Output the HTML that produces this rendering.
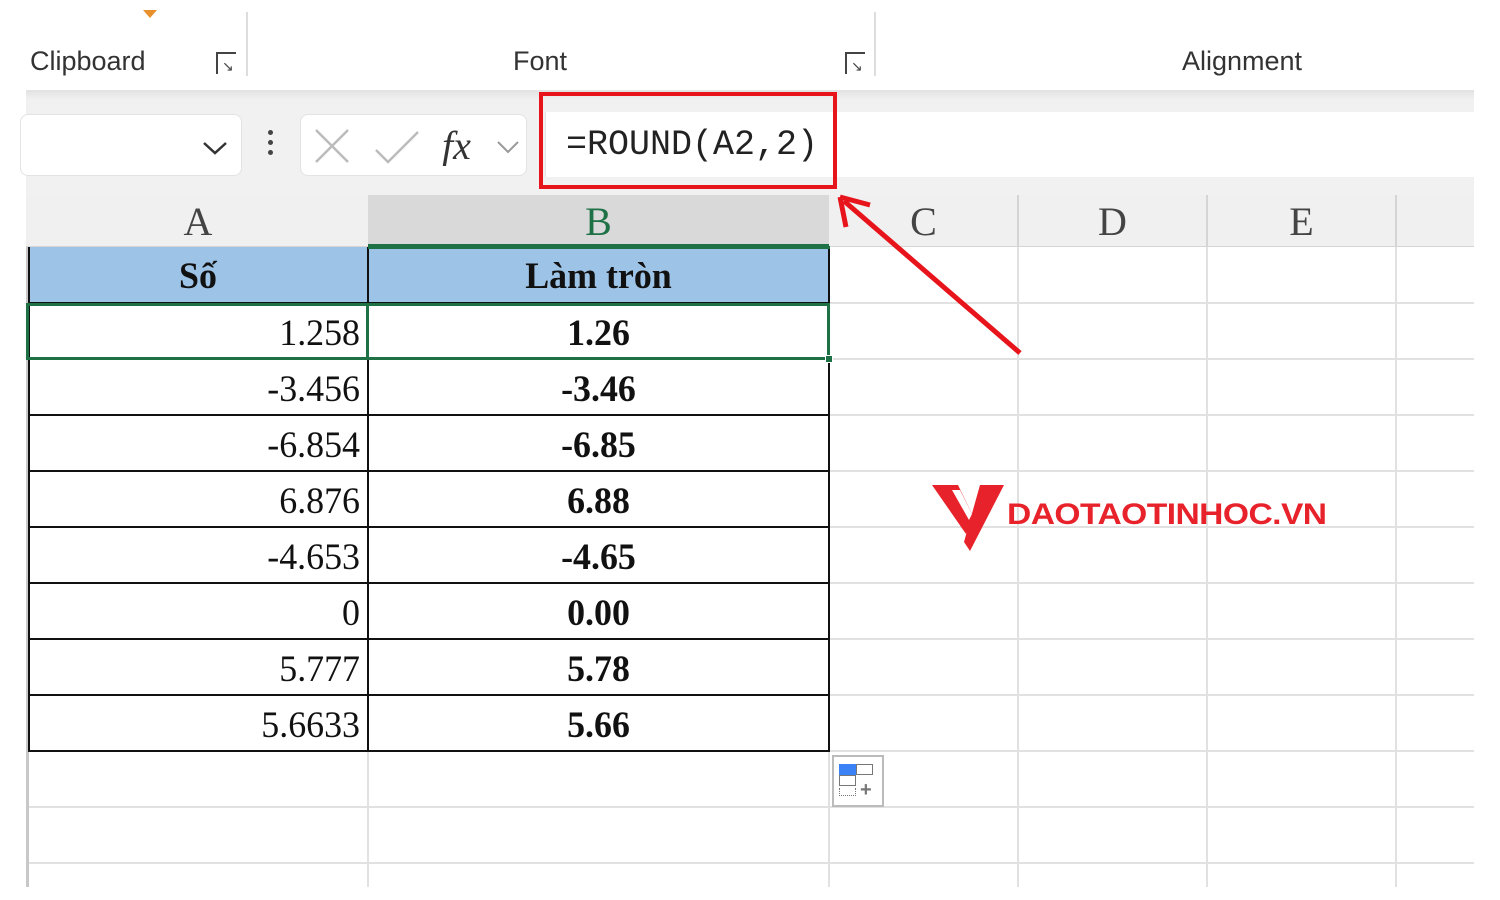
<!DOCTYPE html>
<html><head><meta charset="utf-8"><style>
*{margin:0;padding:0;box-sizing:border-box}
body{width:1500px;height:900px;background:#fff;position:relative;overflow:hidden;font-family:"Liberation Sans",sans-serif}
.a{position:absolute}
.hl{position:absolute;height:2px;background:#e1e1e1}
.vl{position:absolute;width:2px;background:#e1e1e1}
.c{position:absolute;font-family:"Liberation Serif",serif;font-size:37px;line-height:56px;color:#111;transform:scaleX(.97)}
.r{text-align:right;transform-origin:right}
.m{text-align:center;font-weight:bold}
.colh{position:absolute;top:195px;height:52px;font-family:"Liberation Serif",serif;font-size:40px;line-height:54px;text-align:center;color:#444}
</style></head><body>
<!-- ribbon -->
<div class="a" style="left:143px;top:10px;width:0;height:0;border-left:7px solid transparent;border-right:7px solid transparent;border-top:8px solid #e8912c"></div>
<div class="a" style="left:30px;top:46px;font-size:27px;color:#333">Clipboard</div>
<div class="a" style="left:216px;top:52px;width:20px;height:22px;border-left:2px solid #444;border-top:2px solid #444"></div>
<div class="a" style="left:222px;top:58px;font-size:14px;color:#444">↘</div>
<div class="a" style="left:246px;top:12px;width:2px;height:64px;background:#ddd"></div>
<div class="a" style="left:513px;top:46px;font-size:27px;color:#333">Font</div>
<div class="a" style="left:845px;top:52px;width:20px;height:22px;border-left:2px solid #444;border-top:2px solid #444"></div>
<div class="a" style="left:851px;top:58px;font-size:14px;color:#444">↘</div>
<div class="a" style="left:874px;top:12px;width:2px;height:64px;background:#ddd"></div>
<div class="a" style="left:1182px;top:46px;font-size:27px;color:#333">Alignment</div>
<!-- formula bar -->
<div class="a" style="left:26px;top:90px;width:1448px;height:105px;background:#f1f1f1;border-top:1px solid #ddd"></div>
<div class="a" style="left:26px;top:90px;width:1448px;height:10px;background:linear-gradient(#e2e2e2,#f1f1f1)"></div>
<div class="a" style="left:20px;top:114px;width:222px;height:62px;background:#fff;border:1px solid #e3e3e3;border-radius:8px"></div>
<svg class="a" style="left:200px;top:138px" width="30" height="18"><path d="M4 5 L15 15 L26 5" fill="none" stroke="#333" stroke-width="2.5"/></svg>
<div class="a" style="left:268px;top:130px;width:5px;height:5px;background:#444;border-radius:3px;box-shadow:0 10px 0 #444,0 20px 0 #444"></div>
<div class="a" style="left:300px;top:114px;width:227px;height:62px;background:#fff;border:1px solid #e3e3e3;border-radius:8px"></div>
<svg class="a" style="left:312px;top:126px" width="210" height="40"><path d="M4 4 L36 36 M36 4 L4 36" stroke="#bbb" stroke-width="2.5"/><path d="M64 24 L76 36 L106 6" fill="none" stroke="#bbb" stroke-width="2.5"/><text x="130" y="33" font-family="Liberation Serif" font-style="italic" font-size="40" fill="#333">fx</text><path d="M186 16 L196 26 L206 16" fill="none" stroke="#999" stroke-width="2"/></svg>
<div class="a" style="left:545px;top:112px;width:929px;height:65px;background:#fff;border-left:1px solid #e3e3e3"></div>
<div class="a" style="left:566px;top:125px;font-family:'Liberation Mono',monospace;font-size:35px;color:#222">=ROUND(A2,2)</div>
<div class="a" style="left:539px;top:92px;width:298px;height:97px;border:4px solid #e8141c"></div>
<!-- column headers -->
<div class="a" style="left:26px;top:195px;width:1448px;height:52px;background:#f0f0f0;border-bottom:1px solid #d5d5d5"></div>
<div class="a" style="left:368px;top:195px;width:461px;height:52px;background:#d9d9d9;border-bottom:3px solid #1e7145"></div>
<div class="colh" style="left:28px;width:340px">A</div>
<div class="colh" style="left:368px;width:461px;color:#1e7145">B</div>
<div class="colh" style="left:829px;width:189px">C</div>
<div class="colh" style="left:1018px;width:189px">D</div>
<div class="colh" style="left:1207px;width:189px">E</div>
<div class="vl" style="left:1017px;top:195px;height:52px;background:#d5d5d5"></div>
<div class="vl" style="left:1206px;top:195px;height:52px;background:#d5d5d5"></div>
<div class="vl" style="left:1395px;top:195px;height:52px;background:#d5d5d5"></div>
<!-- grid -->
<div class="hl" style="left:26px;top:302px;width:1448px"></div>
<div class="hl" style="left:26px;top:358px;width:1448px"></div>
<div class="hl" style="left:26px;top:414px;width:1448px"></div>
<div class="hl" style="left:26px;top:470px;width:1448px"></div>
<div class="hl" style="left:26px;top:526px;width:1448px"></div>
<div class="hl" style="left:26px;top:582px;width:1448px"></div>
<div class="hl" style="left:26px;top:638px;width:1448px"></div>
<div class="hl" style="left:26px;top:694px;width:1448px"></div>
<div class="hl" style="left:26px;top:750px;width:1448px"></div>
<div class="hl" style="left:26px;top:806px;width:1448px"></div>
<div class="hl" style="left:26px;top:862px;width:1448px"></div>
<div class="vl" style="left:367px;top:751px;height:136px"></div>
<div class="vl" style="left:828px;top:247px;height:640px"></div>
<div class="vl" style="left:1017px;top:247px;height:640px"></div>
<div class="vl" style="left:1206px;top:247px;height:640px"></div>
<div class="vl" style="left:1395px;top:247px;height:640px"></div>
<div class="a" style="left:26px;top:247px;width:3px;height:640px;background:#c8c8c8"></div>
<!-- table -->
<div class="a" style="left:28px;top:247px;width:801px;height:56px;background:#9dc3e6"></div>
<div class="a" style="left:28px;top:247px;width:802px;height:505px;border:2px solid #111;border-top:none"></div>
<div class="a" style="left:367px;top:247px;width:2px;height:505px;background:#111"></div>
<div class="a" style="left:28px;top:302px;width:801px;height:2px;background:#111"></div>
<div class="a" style="left:28px;top:358px;width:801px;height:2px;background:#111"></div>
<div class="a" style="left:28px;top:414px;width:801px;height:2px;background:#111"></div>
<div class="a" style="left:28px;top:470px;width:801px;height:2px;background:#111"></div>
<div class="a" style="left:28px;top:526px;width:801px;height:2px;background:#111"></div>
<div class="a" style="left:28px;top:582px;width:801px;height:2px;background:#111"></div>
<div class="a" style="left:28px;top:638px;width:801px;height:2px;background:#111"></div>
<div class="a" style="left:28px;top:694px;width:801px;height:2px;background:#111"></div>
<!-- green selection -->
<div class="a" style="left:368px;top:246px;width:462px;height:3px;background:#1e7145"></div>
<div class="a" style="left:26px;top:303px;width:804px;height:57px;border:3px solid #1e7145"></div>
<div class="a" style="left:366px;top:303px;width:3px;height:57px;background:#1e7145"></div>
<div class="a" style="left:825px;top:355px;width:8px;height:8px;background:#1e7145;border:1px solid #fff"></div>
<div class="c m" style="left:28px;top:249px;width:340px">Số</div>
<div class="c m" style="left:368px;top:249px;width:461px">Làm tròn</div>
<div class="c r" style="left:28px;top:306px;width:332px">1.258</div>
<div class="c r" style="left:28px;top:362px;width:332px">-3.456</div>
<div class="c r" style="left:28px;top:418px;width:332px">-6.854</div>
<div class="c r" style="left:28px;top:474px;width:332px">6.876</div>
<div class="c r" style="left:28px;top:530px;width:332px">-4.653</div>
<div class="c r" style="left:28px;top:586px;width:332px">0</div>
<div class="c r" style="left:28px;top:642px;width:332px">5.777</div>
<div class="c r" style="left:28px;top:698px;width:332px">5.6633</div>
<div class="c m" style="left:368px;top:306px;width:461px">1.26</div>
<div class="c m" style="left:368px;top:362px;width:461px">-3.46</div>
<div class="c m" style="left:368px;top:418px;width:461px">-6.85</div>
<div class="c m" style="left:368px;top:474px;width:461px">6.88</div>
<div class="c m" style="left:368px;top:530px;width:461px">-4.65</div>
<div class="c m" style="left:368px;top:586px;width:461px">0.00</div>
<div class="c m" style="left:368px;top:642px;width:461px">5.78</div>
<div class="c m" style="left:368px;top:698px;width:461px">5.66</div>
<!-- paste options -->
<div class="a" style="left:832px;top:755px;width:52px;height:52px;background:#fff;border:2px solid #bbb"></div>
<div class="a" style="left:839px;top:764px;width:17px;height:11px;background:#3b82f6"></div>
<div class="a" style="left:856px;top:764px;width:17px;height:11px;border:1px solid #777"></div>
<div class="a" style="left:839px;top:775px;width:17px;height:11px;border:1px solid #777"></div>
<div class="a" style="left:839px;top:788px;width:17px;height:8px;border:1px dotted #777;border-top:none"></div>
<div class="a" style="left:860px;top:779px;font-size:20px;font-weight:bold;color:#777">+</div>
<!-- arrow -->
<svg class="a" style="left:830px;top:185px" width="200" height="180"><path d="M190 168 L14 16" stroke="#e8141c" stroke-width="5"/><path d="M10 12 L40 20 M10 12 L16 42" stroke="#e8141c" stroke-width="5" fill="none"/></svg>
<!-- logo -->
<svg class="a" style="left:930px;top:482px" width="75" height="72"><path d="M2 3 L28 3 L44 36 L36 52 Z" fill="#e8222b"/><path d="M50 3 L74 3 L40 69 L34 60 Z" fill="#e8222b"/><path d="M22 8 L30 8 L42 32 L39 38 Z" fill="#fff"/></svg>
<div class="a" style="left:1007px;top:498px;font-size:30px;font-weight:bold;color:#e8222b;letter-spacing:-0.5px;transform:scaleX(1.12);transform-origin:left">DAOTAOTINHOC.VN</div>
</body></html>
